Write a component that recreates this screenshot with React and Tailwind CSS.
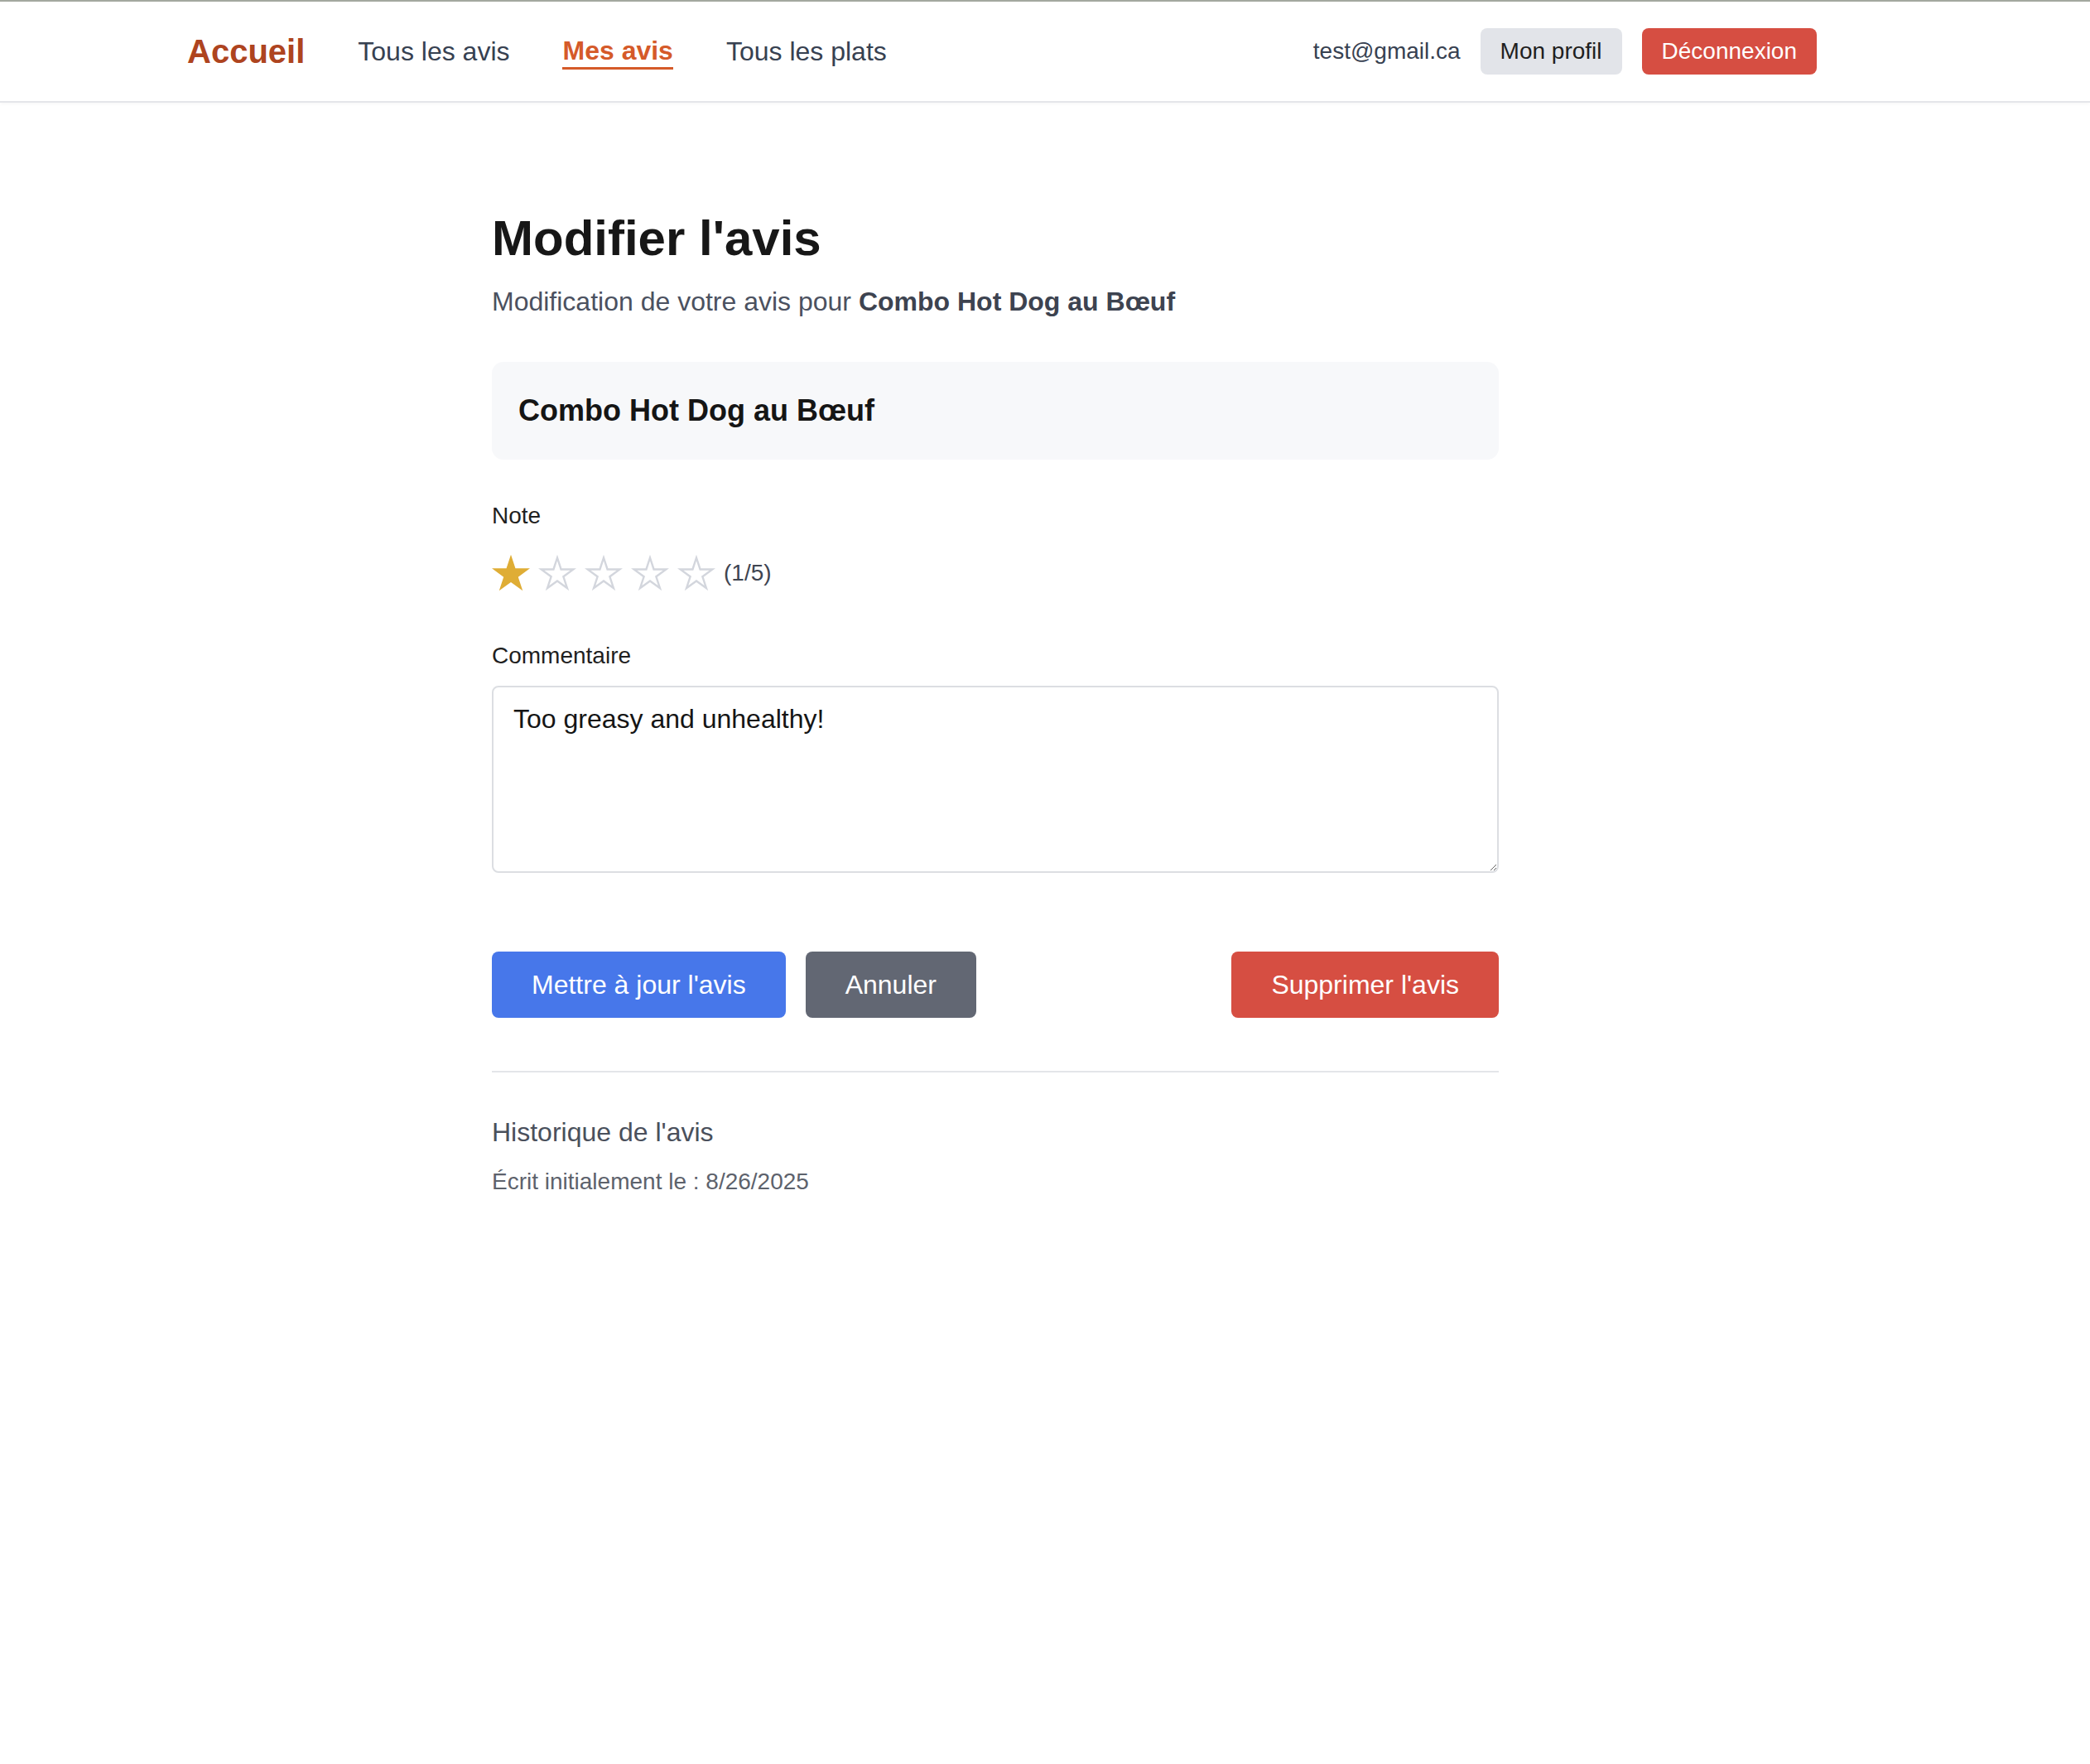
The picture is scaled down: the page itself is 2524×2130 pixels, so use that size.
import React from 'react'

const navLinks = [
  { label: 'Tous les avis', active: false },
  { label: 'Mes avis', active: true },
  { label: 'Tous les plats', active: false },
]

// outer star + inner star (evenodd) gives the ☆ outline look
const OUTER = 'M50 0 L61.8 36.32 L100 36.32 L69.1 58.78 L80.9 95.1 L50 72.65 L19.1 95.1 L30.9 58.78 L0 36.32 L38.2 36.32 Z'
const INNER = 'M50 16.82 L41.98 41.52 L16 41.52 L37.01 56.79 L28.99 81.49 L50 66.22 L71.01 81.49 L62.99 56.79 L84 41.52 L58.02 41.52 Z'

function Star({ filled }) {
  return (
    <svg width="46" height="45" viewBox="0 0 100 95.1" className="shrink-0">
      {filled ? (
        <path d={OUTER} fill="#dfad35" />
      ) : (
        <path d={OUTER + ' ' + INNER} fill="#d3d6dd" fillRule="evenodd" />
      )}
    </svg>
  )
}

function Header() {
  return (
    <header className="border-t-2 border-b-2 border-t-[#a3a89f] border-b-[#e5e6ea] bg-white shadow-[0_2px_4px_rgba(0,0,0,0.03)]">
      <div className="ml-[226px] flex h-[120px] w-[1968px] items-center justify-between">
        <nav className="flex items-center gap-[64px]">
          <span className="text-[40px] font-bold leading-[56px] text-[#ae441f]">Accueil</span>
          {navLinks.map((link) =>
            link.active ? (
              <span
                key={link.label}
                className="border-b-[3px] border-[#d55a29] text-[32px] font-bold leading-[40px] text-[#d55a29]"
              >
                {link.label}
              </span>
            ) : (
              <span key={link.label} className="text-[32px] leading-[48px] text-[#374151]">
                {link.label}
              </span>
            )
          )}
        </nav>

        <div className="flex items-center gap-[24px]">
          <span className="text-[28px] leading-[40px] text-[#374151]">test@gmail.ca</span>
          <button className="rounded-[8px] bg-[#e2e4e9] px-[24px] py-[8px] text-[28px] leading-[40px] text-[#1f1f1f]">
            Mon profil
          </button>
          <button className="rounded-[8px] bg-[#d64e42] px-[24px] py-[8px] text-[28px] leading-[40px] text-white">
            Déconnexion
          </button>
        </div>
      </div>
    </header>
  )
}

export default function App() {
  const rating = 1

  return (
    <div className="min-h-screen bg-white font-['Liberation_Sans',Arial,sans-serif]">
      <Header />

      <main className="ml-[594px] w-[1216px] pt-[128px] pb-[64px]">
        <h1 className="text-[60px] font-bold leading-[72px] text-[#171717]">Modifier l'avis</h1>
        <p className="mt-[16px] text-[32px] leading-[48px] text-[#4b5160]">
          Modification de votre avis pour{' '}
          <span className="font-bold text-[#3d4350]">Combo Hot Dog au Bœuf</span>
        </p>

        <div className="mt-[49px] rounded-[14px] bg-[#f7f8fa] px-[32px] py-[31px]">
          <h2 className="text-[36px] font-bold leading-[56px] text-[#151515]">Combo Hot Dog au Bœuf</h2>
        </div>

        <label className="mt-[48px] block text-[28px] leading-[40px] text-[#1f1f1f]">Note</label>
        <div className="mt-[26px] flex items-center gap-[10px]">
          {[1, 2, 3, 4, 5].map((n) => (
            <Star key={n} filled={n <= rating} />
          ))}
          <span className="text-[28px] leading-[40px] text-[#3f4551]">({rating}/5)</span>
        </div>

        <label className="mt-[58px] block text-[28px] leading-[40px] text-[#1f1f1f]">Commentaire</label>
        <textarea
          defaultValue="Too greasy and unhealthy!"
          className="mt-[16px] block h-[226px] w-full rounded-[8px] border-2 border-[#dcdee2] px-[24px] py-[14px] text-[32px] leading-[48px] text-[#151515] outline-none"
        />

        <div className="mt-[95px] flex items-center justify-between">
          <div className="flex items-center gap-[24px]">
            <button className="rounded-[8px] bg-[#4777ea] px-[48px] py-[16px] text-[32px] leading-[48px] text-white">
              Mettre à jour l'avis
            </button>
            <button className="rounded-[8px] bg-[#626773] px-[48px] py-[16px] text-[32px] leading-[48px] text-white">
              Annuler
            </button>
          </div>
          <button className="rounded-[8px] bg-[#d64e42] px-[48px] py-[16px] text-[32px] leading-[48px] text-white">
            Supprimer l'avis
          </button>
        </div>

        <div className="mt-[64px] border-t-2 border-[#e4e5e9] pt-[48px]">
          <h3 className="text-[32px] leading-[48px] text-[#4a505c]">Historique de l'avis</h3>
          <p className="mt-[16px] text-[28px] leading-[40px] text-[#5d626c]">Écrit initialement le : 8/26/2025</p>
        </div>
      </main>
    </div>
  )
}
